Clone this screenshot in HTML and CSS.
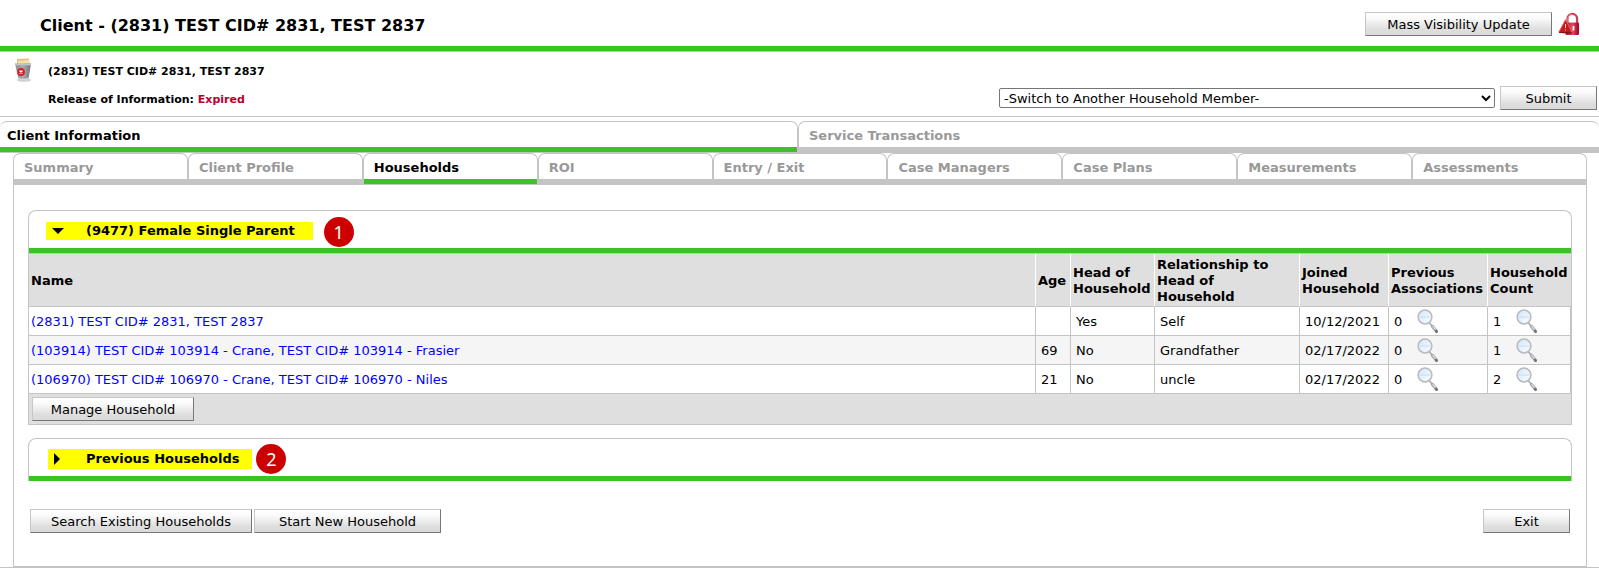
FILE: index.html
```html
<!DOCTYPE html>
<html lang="en">
<head>
<meta charset="utf-8">
<title>Client - (2831) TEST CID# 2831, TEST 2837</title>
<link rel="stylesheet" href="styles.css">
</head>
<body>
<svg class="defs" aria-hidden="true">
  <defs>
    <linearGradient id="lens" x1="0" y1="0" x2="1" y2="1"><stop offset="0" stop-color="#d3e6fa"/><stop offset="1" stop-color="#fbfdff"/></linearGradient>
    <linearGradient id="metal" x1="0" y1="0" x2="1" y2="0"><stop offset="0" stop-color="#8b8d92"/><stop offset=".5" stop-color="#a9abb0"/><stop offset="1" stop-color="#74767b"/></linearGradient>
    <linearGradient id="red" x1="0" y1="0" x2="1" y2="0"><stop offset="0" stop-color="#a80c28"/><stop offset=".5" stop-color="#dc5068"/><stop offset="1" stop-color="#a00020"/></linearGradient>
    <symbol id="magnifier" viewBox="0 0 22 25">
      <path d="M12.500 14l3.500 4" stroke="#a8a8a8" stroke-width="1.600"/>
      <path d="M15.500 17.500l4 4.800" stroke="#a0a4a8" stroke-width="3.200" stroke-linecap="round"/>
      <path d="M15.600 17.200l3.500 4.300" stroke="#dcdee0" stroke-width="1.200"/>
      <path d="M19 22l.6.700" stroke="#707478" stroke-width="2.600" stroke-linecap="round"/>
      <circle cx="8" cy="8" r="6.900" fill="url(#lens)" stroke="#b8babd" stroke-width="1.500"/>
      <path d="M2.500 8h11" stroke="#bdd6f0" stroke-width=".8"/>
    </symbol>
  </defs>
</svg>

<header class="title-bar">
  <h1 class="title">Client - (2831) TEST CID# 2831, TEST 2837</h1>
  <div class="title-actions">
    <button class="btn btn-mass" type="button">Mass Visibility Update</button>
    <svg class="lock" viewBox="0 0 22 24" role="img" aria-label="Locked">
      <path d="M9.500 12V7a4.800 5.200 0 0 1 9.600 0v5" fill="none" stroke="#cb4258" stroke-width="2.200"/>
      <path d="M10 11V7a4 4.400 0 0 1 4-4.800" fill="none" stroke="#eba5b0" stroke-width=".8"/>
      <rect x="7.500" y="10.500" width="13.500" height="12.500" rx="1" fill="url(#red)"/>
      <path d="M15.500 14v4.500" stroke="#fff" stroke-width="1.800"/>
      <path d="M7.500 7.500L14 20l-3 .6L.8 20z" fill="#c8181c" stroke="#e07c7c" stroke-width=".8"/>
      <path d="M1 20.200l13 .8" stroke="#8c1014" stroke-width="1.400"/>
      <path d="M7.500 12v4M7.500 17.500v1" stroke="#f6d0d0" stroke-width="1"/>
    </svg>
  </div>
</header>

<section class="client">
  <svg class="bin" viewBox="0 0 18 24" role="img" aria-label="Delete client">
    <ellipse cx="10" cy="22" rx="7" ry="1.800" fill="#d2d2d2"/>
    <path d="M3 1l12-.5.500 6H3z" fill="#e5c07c"/>
    <path d="M4 3l11-1v4H4z" fill="#f4dfae"/>
    <path d="M1 5.500h16L14.500 21q-5.500 2.500-10 0z" fill="url(#metal)"/>
    <path d="M1 5.500h16v1.800H1z" fill="#c2c4c8"/>
    <path d="M4 20.500q5 2 10.500 0" fill="none" stroke="#dadada" stroke-width="1.400"/>
    <circle cx="7" cy="14" r="3.900" fill="#d3202c"/>
    <path d="M5.500 12.500l3 3M8.500 12.500l-3 3" stroke="#fff" stroke-width="1.100"/>
  </svg>
  <div class="client-text">
    <p class="client-line">(2831) TEST CID# 2831, TEST 2837</p>
    <p class="client-line">Release of Information: <span class="expired">Expired</span></p>
  </div>
  <form class="switcher">
    <select class="member" aria-label="Switch to Another Household Member"><option>-Switch to Another Household Member-</option></select>
    <button class="btn btn-submit" type="button">Submit</button>
  </form>
</section>

<nav class="tabs tabs-main" aria-label="Client sections">
  <a class="tab active" href="#information">Client Information</a>
  <a class="tab" href="#transactions">Service Transactions</a>
</nav>

<div class="body">
  <nav class="tabs tabs-sub" aria-label="Client information">
    <a class="tab" href="#summary">Summary</a>
    <a class="tab" href="#profile">Client Profile</a>
    <a class="tab active" href="#households">Households</a>
    <a class="tab" href="#roi">ROI</a>
    <a class="tab" href="#entry">Entry / Exit</a>
    <a class="tab" href="#managers">Case Managers</a>
    <a class="tab" href="#plans">Case Plans</a>
    <a class="tab" href="#measurements">Measurements</a>
    <a class="tab" href="#assessments">Assessments</a>
  </nav>
  <main class="panel">
    <section class="box">
      <div class="box-head">
        <button class="toggle" type="button" aria-expanded="true"><svg class="arrow" viewBox="0 0 12 12" aria-hidden="true"><path d="M0 3h12L6 9z"/></svg>(9477) Female Single Parent</button>
        <span class="badge">1</span>
      </div>
      <div class="box-body">
        <table class="members">
          <colgroup><col><col class="c-age"><col class="c-head"><col class="c-rel"><col class="c-joined"><col class="c-prev"><col class="c-count"></colgroup>
          <thead>
            <tr><th>Name</th><th>Age</th><th>Head of Household</th><th class="rel">Relationship to Head of Household</th><th>Joined Household</th><th>Previous Associations</th><th>Household Count</th></tr>
          </thead>
          <tbody>
            <tr><td><a href="#2831">(2831) TEST CID# 2831, TEST 2837</a></td><td></td><td>Yes</td><td>Self</td><td>10/12/2021</td>
              <td><span class="count">0<button class="look" type="button" aria-label="View previous associations"><svg class="mag"><use href="#magnifier"/></svg></button></span></td>
              <td><span class="count">1<button class="look" type="button" aria-label="View households"><svg class="mag"><use href="#magnifier"/></svg></button></span></td></tr>
            <tr><td><a href="#103914">(103914) TEST CID# 103914 - Crane, TEST CID# 103914 - Frasier</a></td><td>69</td><td>No</td><td>Grandfather</td><td>02/17/2022</td>
              <td><span class="count">0<button class="look" type="button" aria-label="View previous associations"><svg class="mag"><use href="#magnifier"/></svg></button></span></td>
              <td><span class="count">1<button class="look" type="button" aria-label="View households"><svg class="mag"><use href="#magnifier"/></svg></button></span></td></tr>
            <tr><td><a href="#106970">(106970) TEST CID# 106970 - Crane, TEST CID# 106970 - Niles</a></td><td>21</td><td>No</td><td>uncle</td><td>02/17/2022</td>
              <td><span class="count">0<button class="look" type="button" aria-label="View previous associations"><svg class="mag"><use href="#magnifier"/></svg></button></span></td>
              <td><span class="count">2<button class="look" type="button" aria-label="View households"><svg class="mag"><use href="#magnifier"/></svg></button></span></td></tr>
          </tbody>
        </table>
        <div class="box-foot"><button class="btn btn-manage" type="button">Manage Household</button></div>
      </div>
    </section>

    <section class="box">
      <div class="box-head">
        <button class="toggle toggle-closed" type="button" aria-expanded="false"><svg class="arrow" viewBox="0 0 12 12" aria-hidden="true"><path d="M2 0v12l6-6z"/></svg>Previous Households</button>
        <span class="badge">2</span>
      </div>
    </section>

    <div class="actions">
      <button class="btn btn-search" type="button">Search Existing Households</button>
      <button class="btn btn-start" type="button">Start New Household</button>
      <button class="btn btn-exit" type="button">Exit</button>
    </div>
  </main>
</div>
</body>
</html>
```

FILE: styles.css
```css
* { box-sizing: border-box; }
body {
  margin: 0;
  background: #fff;
  color: #000;
  font: 13px/16px Verdana, "DejaVu Sans", sans-serif;
}
button, select { font: inherit; color: inherit; }
.defs { position: absolute; width: 0; height: 0; }

.title-bar {
  display: flex;
  align-items: center;
  justify-content: space-between;
  height: 52px;
  padding: 0 18px 0 40px;
  border-bottom: 1px solid #c4c4c4;
  box-shadow: inset 0 -5px #3bc224;
}
.title { margin: 0; font-size: 16px; line-height: 20px; }
.title-actions { display: flex; align-items: center; gap: 6px; margin-bottom: 3px; }
.lock { width: 22px; height: 24px; margin-right: 1px; }

.btn {
  height: 24px;
  padding: 2px 0 0;
  border: 1px solid;
  border-color: #c6c6c6 #777 #777 #c6c6c6;
  background: linear-gradient(#fff, #fafafa 25%, #dedede 75%, #dadada);
  line-height: 20px;
  white-space: nowrap;
}
.btn-mass { width: 187px; }
.btn-submit { width: 97px; }
.btn-manage { width: 162px; }
.btn-search { width: 222px; }
.btn-start { width: 187px; }
.btn-exit { width: 87px; margin-left: auto; }

.client {
  display: flex;
  align-items: flex-start;
  padding: 6px 2px 6px 14px;
  border-bottom: 1px solid #c4c4c4;
}
.bin { width: 18px; height: 24px; margin-right: 16px; }
.client-text { font-size: 11px; line-height: 14px; font-weight: bold; }
.client-line { margin: 7px 0 14px; }
.client-line + .client-line { margin: 0; }
.expired { color: #b8002c; }
.switcher { display: flex; align-items: center; gap: 5px; margin: 28px 0 0 auto; }
.member {
  width: 496px;
  height: 20px;
  padding: 0;
  border: 1px solid #767676;
  border-radius: 2px;
  background: #fff;
}

.tabs { display: flex; font-weight: bold; }
.tab {
  flex: 1 1 0;
  height: 32px;
  padding: 6px 0 0 10px;
  border: 1px solid #c4c4c4;
  border-bottom: 0;
  border-radius: 7px 7px 0 0;
  background: linear-gradient(#c4c4c4, #c4c4c4) bottom / 100% 6px no-repeat;
  color: #999;
  line-height: 16px;
  text-decoration: none;
}
.tab.active {
  background-image: linear-gradient(#3bc224 5px, #c4c4c4 5px);
  color: #000;
}
.tabs-main { margin-top: 4px; }
.tabs-main .tab:first-child { padding-left: 7px; border-left: 0; }
.tabs-main .tab:last-child { border-right: 0; }

.body { padding: 0 12px 0 13px; border-bottom: 1px solid #c4c4c4; }
.panel {
  padding: 25px 14px 33px;
  border: solid #c4c4c4;
  border-width: 0 1px 1px;
}
.box { margin-bottom: 13px; }
.box-head {
  display: flex;
  align-items: center;
  height: 43px;
  padding: 2px 0 5px 17px;
  border: 1px solid #c4c4c4;
  border-bottom: 0;
  border-radius: 8px 8px 0 0;
  background: linear-gradient(#3bc224, #3bc224) bottom / 100% 5px no-repeat border-box;
}
.toggle {
  display: flex;
  align-items: center;
  gap: 22px;
  height: 18px;
  padding: 1px 18px 0 6px;
  border: 0;
  background: #ff0;
  font-weight: bold;
}
.toggle-closed { height: 20px; margin-left: 2px; padding: 0 13px 0 4px; }
.arrow { width: 12px; height: 12px; }
.badge {
  width: 30px;
  height: 30px;
  margin: 2px 0 0 11px;
  border-radius: 50%;
  background: #c00;
  color: #fff;
  font: 18px/30px "Noto Sans", sans-serif;
  text-align: center;
}
.toggle-closed + .badge { margin: 0 0 0 4px; }

.box-body { border: 1px solid #c4c4c4; background: #dfdfdf; }
.members { width: 100%; table-layout: fixed; border-collapse: separate; border-spacing: 0; }
.c-age { width: 35px; }
.c-head { width: 84px; }
.c-rel { width: 145px; }
.c-joined { width: 89px; }
.c-prev { width: 99px; }
.c-count { width: 83px; }
.members th {
  height: 53px;
  padding: 3px 0 1px 2px;
  border-right: 1px solid #fff;
  border-bottom: 1px solid #c4c4c4;
  text-align: left;
}
.members th.rel { padding-right: 20px; }
.members th:last-child { border-right: 0; }
.members td {
  height: 29px;
  padding: 1px 0 0 5px;
  border-right: 1px solid #c4c4c4;
  border-bottom: 1px solid #c4c4c4;
  background: #fff;
  white-space: nowrap;
}
.members td:first-child { padding-left: 2px; }
.members tr:nth-child(even) td { background: #f5f5f5; }
.members a { color: #00f; text-decoration: none; }
.count { display: flex; align-items: center; gap: 15px; }
.look { height: 25px; padding: 0; border: 0; background: none; }
.mag { display: block; width: 22px; height: 25px; }
.box-foot { padding: 3px; }

.actions { display: flex; gap: 2px; padding: 15px 2px 0; }
```
